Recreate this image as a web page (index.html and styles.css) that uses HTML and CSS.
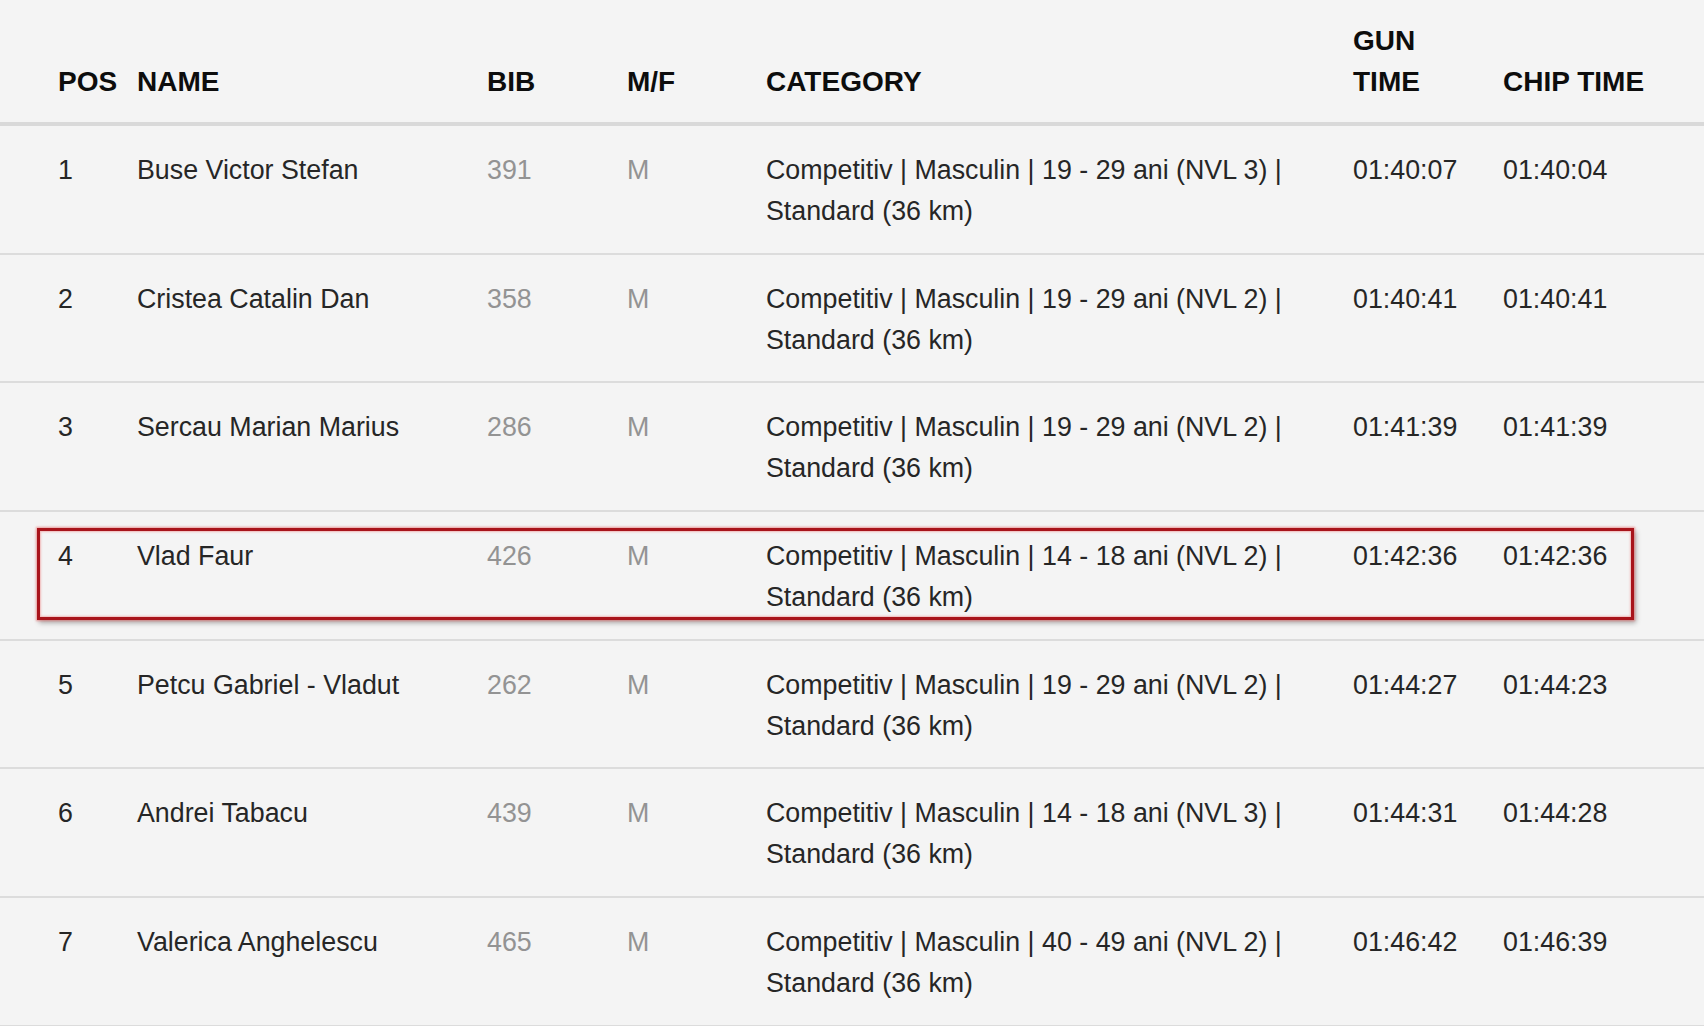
FILE: index.html
```html
<!DOCTYPE html>
<html lang="ro">
<head>
<meta charset="utf-8">
<title>Rezultate</title>
<link rel="stylesheet" href="styles.css">
</head>
<body>
<div class="results">
  <div class="row head">
    <div class="cell">POS</div>
    <div class="cell">NAME</div>
    <div class="cell">BIB</div>
    <div class="cell">M/F</div>
    <div class="cell">CATEGORY</div>
    <div class="cell">GUN TIME</div>
    <div class="cell">CHIP TIME</div>
  </div>
  <div class="row">
    <div class="cell">1</div>
    <div class="cell">Buse Victor Stefan</div>
    <div class="cell muted">391</div>
    <div class="cell muted">M</div>
    <div class="cell">Competitiv | Masculin | 19 - 29 ani (NVL 3) | Standard (36 km)</div>
    <div class="cell">01:40:07</div>
    <div class="cell">01:40:04</div>
  </div>
  <div class="row">
    <div class="cell">2</div>
    <div class="cell">Cristea Catalin Dan</div>
    <div class="cell muted">358</div>
    <div class="cell muted">M</div>
    <div class="cell">Competitiv | Masculin | 19 - 29 ani (NVL 2) | Standard (36 km)</div>
    <div class="cell">01:40:41</div>
    <div class="cell">01:40:41</div>
  </div>
  <div class="row">
    <div class="cell">3</div>
    <div class="cell">Sercau Marian Marius</div>
    <div class="cell muted">286</div>
    <div class="cell muted">M</div>
    <div class="cell">Competitiv | Masculin | 19 - 29 ani (NVL 2) | Standard (36 km)</div>
    <div class="cell">01:41:39</div>
    <div class="cell">01:41:39</div>
  </div>
  <div class="row marked">
    <div class="cell">4</div>
    <div class="cell">Vlad Faur</div>
    <div class="cell muted">426</div>
    <div class="cell muted">M</div>
    <div class="cell">Competitiv | Masculin | 14 - 18 ani (NVL 2) | Standard (36 km)</div>
    <div class="cell">01:42:36</div>
    <div class="cell">01:42:36</div>
    <div class="highlight"></div>
  </div>
  <div class="row">
    <div class="cell">5</div>
    <div class="cell">Petcu Gabriel - Vladut</div>
    <div class="cell muted">262</div>
    <div class="cell muted">M</div>
    <div class="cell">Competitiv | Masculin | 19 - 29 ani (NVL 2) | Standard (36 km)</div>
    <div class="cell">01:44:27</div>
    <div class="cell">01:44:23</div>
  </div>
  <div class="row">
    <div class="cell">6</div>
    <div class="cell">Andrei Tabacu</div>
    <div class="cell muted">439</div>
    <div class="cell muted">M</div>
    <div class="cell">Competitiv | Masculin | 14 - 18 ani (NVL 3) | Standard (36 km)</div>
    <div class="cell">01:44:31</div>
    <div class="cell">01:44:28</div>
  </div>
  <div class="row">
    <div class="cell">7</div>
    <div class="cell">Valerica Anghelescu</div>
    <div class="cell muted">465</div>
    <div class="cell muted">M</div>
    <div class="cell">Competitiv | Masculin | 40 - 49 ani (NVL 2) | Standard (36 km)</div>
    <div class="cell">01:46:42</div>
    <div class="cell">01:46:39</div>
  </div>
</div>
</body>
</html>
```
FILE: styles.css
```css
html, body {
  margin: 0;
  padding: 0;
  background: #f4f4f4;
}
body {
  font-family: "Liberation Sans", Arial, sans-serif;
  color: #262626;
  overflow: hidden;
}
.results {
  display: flex;
  flex-direction: column;
}
.row {
  position: relative;
  display: grid;
  grid-template-columns: 79px 350px 140px 139px 587px 150px 1fr;
  padding: 24px 0 20.7px 50px;
  border-bottom: 2px solid #dcdcdc;
  font-size: 26.8px;
  line-height: 41px;
}
.cell {
  padding: 0 16px 0 8px;
}
.muted {
  color: #939393;
}
.row.head {
  padding: 20px 0 20px 50px;
  border-bottom: 4px solid #d9d9d9;
  font-size: 28px;
  font-weight: bold;
  color: #0d0d0d;
  align-items: end;
}
.highlight {
  position: absolute;
  left: 37px;
  top: 16px;
  width: 1597px;
  height: 92px;
  box-sizing: border-box;
  border: 3px solid #a8141b;
  box-shadow: 0 0 2px 1px rgba(235, 90, 90, 0.55),
              inset 0 0 2px 1px rgba(235, 110, 110, 0.45),
              2px 3px 5px rgba(0, 0, 0, 0.3);
  pointer-events: none;
}
```
